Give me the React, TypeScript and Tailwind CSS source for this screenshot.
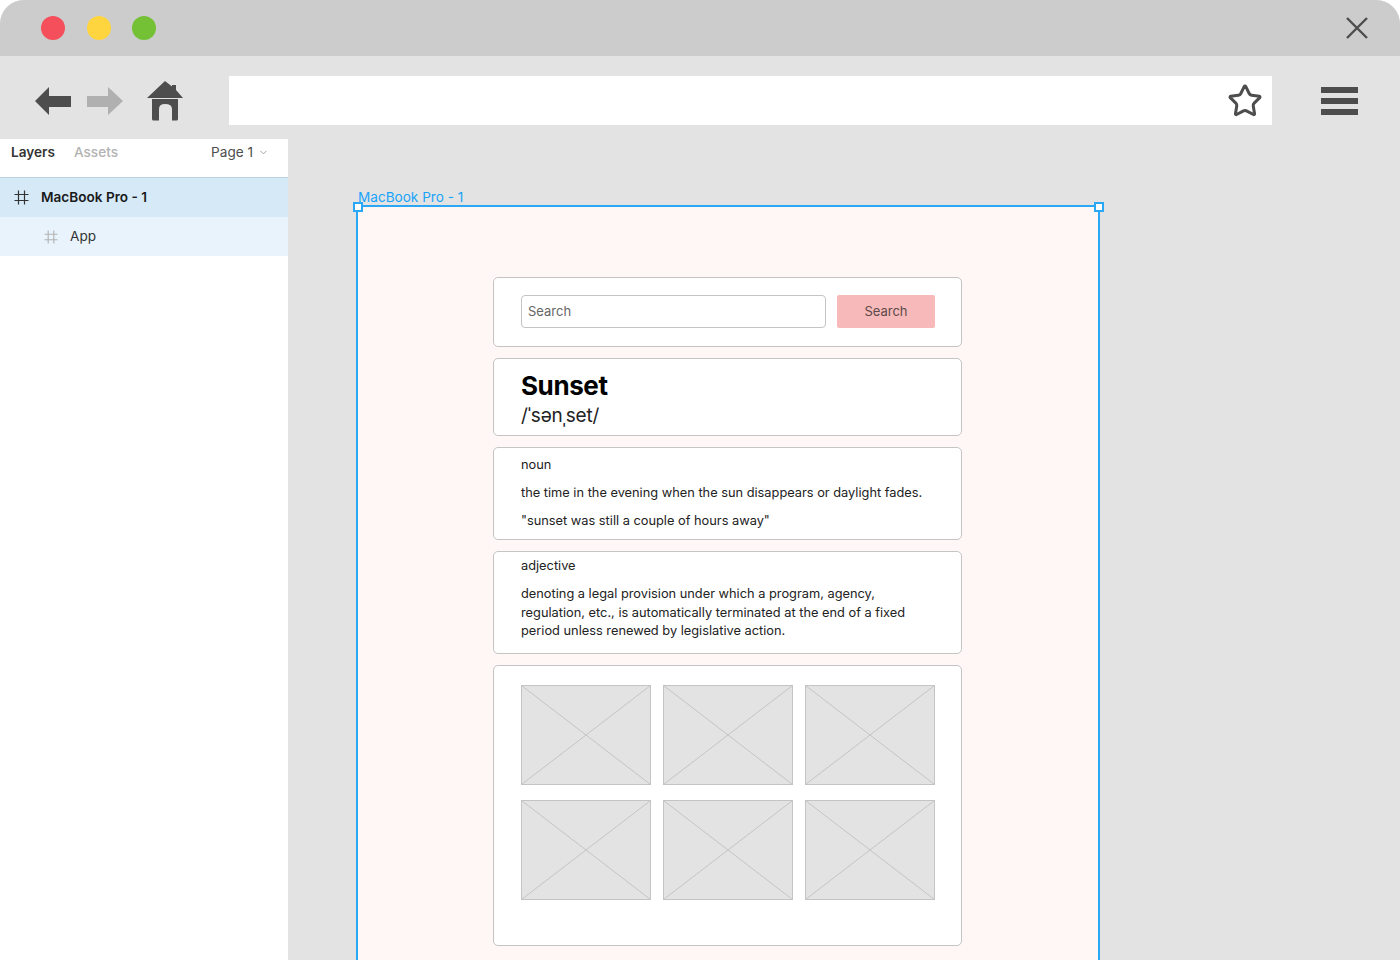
import React from "react";
import { ChevronDown, Star } from "lucide-react";

const HashIcon = ({ className }: { className: string }) => (
  <svg viewBox="0 0 15 15" className={className} fill="none" stroke="currentColor" strokeWidth="1.2">
    <path d="M4.5 0.5V14.5M10.5 0.5V14.5M0.5 4.5H14.5M0.5 10.5H14.5" />
  </svg>
);

const ImagePlaceholder = () => (
  <svg viewBox="0 0 130 100" className="block w-[130px] h-[100px] bg-[#e3e3e3]" fill="none" stroke="#c4c4c4" strokeWidth="1">
    <rect x="0.5" y="0.5" width="129" height="99" />
    <path d="M0.5 0.5L129.5 99.5M129.5 0.5L0.5 99.5" />
  </svg>
);

const card = "w-[469px] bg-white border border-[#c4c4c4] rounded-[5px]";

const App = () => {
  return (
    <div className="w-[1400px] h-[960px] overflow-hidden bg-white font-['Inter',sans-serif]">
      <div className="h-full flex flex-col overflow-hidden bg-[#e3e3e3] rounded-t-[24px]">
        {/* Title bar */}
        <div className="h-14 shrink-0 bg-[#cccccc] flex items-center pl-[41px] pr-[31px]">
          <div className="flex gap-[21.5px]">
            <div className="w-6 h-6 rounded-full bg-[#f44f5a]" />
            <div className="w-6 h-6 rounded-full bg-[#ffd53f]" />
            <div className="w-6 h-6 rounded-full bg-[#74c135]" />
          </div>
          <svg viewBox="0 0 24 24" className="ml-auto w-6 h-6" fill="none" stroke="#4d4d4d" strokeWidth="2.4">
            <path d="M2 2L22 22M22 2L2 22" />
          </svg>
        </div>

        {/* Toolbar */}
        <div className="h-[83px] shrink-0 flex items-center pl-[35px] pt-[6px]">
          <svg viewBox="0 0 36 30" className="w-9 h-[30px]" fill="#4d4d4d">
            <path d="M0 15L14 1V10H36V21H14V29Z" />
          </svg>
          <svg viewBox="0 0 36 30" className="ml-4 w-9 h-[30px]" fill="#b0b0b0">
            <path d="M36 15L21 1V10H0V21H21V29Z" />
          </svg>
          <svg viewBox="0 0 36 40" className="ml-6 w-9 h-10" fill="#4d4d4d">
            <path d="M18 0L25 5.5V4H29V9L36 17H0Z" />
            <path fillRule="evenodd" d="M5 18H31V38Q31 39.5 29.5 39.5H25V28Q25 23 18 23Q12 23 12 28V39.5H6.5Q5 39.5 5 38Z" />
          </svg>
          <div className="ml-[46px] w-[1043px] h-[49px] bg-white flex items-center justify-end pr-[9px]">
            <Star size={36} strokeWidth={2} color="#4d4d4d" />
          </div>
          <div className="ml-[49px] w-[37px] flex flex-col gap-[5px]">
            <div className="h-1.5 bg-[#4d4d4d]" />
            <div className="h-1.5 bg-[#4d4d4d]" />
            <div className="h-1.5 bg-[#4d4d4d]" />
          </div>
        </div>

        <div className="flex-1 flex min-h-0">
          {/* Layers panel */}
          <div className="w-[288px] shrink-0 bg-white text-[13.6px] text-[#333333]">
            <div className="h-[39px] flex items-center pl-[11px] pr-[19px] pb-[11px] border-b border-[#b9d3e6]">
              <span className="font-semibold">Layers</span>
              <span className="ml-[19px] font-medium text-[#b3b3b3]">Assets</span>
              <span className="ml-auto text-[#4d4d4d]">Page 1</span>
              <ChevronDown size={11} className="ml-[5px] text-[#999999]" />
            </div>
            <div className="h-[39px] flex items-center pl-[14px] pb-px bg-[#d5e9f7]">
              <HashIcon className="w-[15px] h-[15px] text-[#333333]" />
              <span className="ml-3 font-semibold text-[#1a1a1a]">MacBook Pro - 1</span>
            </div>
            <div className="h-[39px] flex items-center pl-[44px] bg-[#e8f3fb]">
              <HashIcon className="w-[14px] h-[14px] text-[#b3b3b3]" />
              <span className="ml-3">App</span>
            </div>
          </div>

          {/* Canvas */}
          <div className="flex-1 pl-[68px] pt-[48px]">
            <div className="h-[18px] text-[13.6px] leading-[21px] text-[#18a4fb] pl-[2px]">MacBook Pro - 1</div>
            <div className="relative w-[744px] h-[800px] bg-[#fff6f6] border-2 border-b-0 border-[#2aa8f5] pt-[70px] pl-[135px]">
              <div className="absolute -left-[5px] -top-[5px] w-[10px] h-[10px] bg-white border-2 border-[#2aa8f5]" />
              <div className="absolute -right-[6px] -top-[5px] w-[10px] h-[10px] bg-white border-2 border-[#2aa8f5]" />

              <div className="flex flex-col gap-[11px] text-[#222222] text-[12.8px]">
                <div className={`${card} h-[70px] flex items-center gap-[11px] pl-[27px] pb-[2px]`}>
                  <div className="w-[305px] h-[33px] flex items-center pl-[6px] pt-px border border-[#c4c4c4] rounded-[4px] text-[#666666] text-[13px]">
                    Search
                  </div>
                  <div className="w-[98px] h-[33px] flex items-center justify-center pt-px bg-[#f7b9b9] rounded-[2px] text-[#5e4a4a] text-[13px]">
                    Search
                  </div>
                </div>

                <div className={`${card} h-[78px] pl-[27px] pt-[10px]`}>
                  <div className="text-[26px] leading-[34px] font-bold text-black tracking-[-0.4px]">Sunset</div>
                  <div className="text-[19px] leading-[26px] tracking-[-0.2px] text-[#222222]">/ˈsənˌset/</div>
                </div>

                <div className={`${card} h-[93px] pl-[27px] pt-[8px]`}>
                  <p className="leading-[18px]">noun</p>
                  <p className="mt-[10px] leading-[18px]">the time in the evening when the sun disappears or daylight fades.</p>
                  <p className="mt-[10px] leading-[18px]">"sunset was still a couple of hours away"</p>
                </div>

                <div className={`${card} h-[103px] pl-[27px] pt-[5px]`}>
                  <p className="leading-[18px]">adjective</p>
                  <p className="mt-[10px] w-[400px] leading-[18.5px]">
                    denoting a legal provision under which a program, agency, regulation, etc., is automatically terminated at the end of a fixed period unless renewed by legislative action.
                  </p>
                </div>

                <div className={`${card} h-[281px] pl-[27px] pt-[19px]`}>
                  <div className="grid grid-cols-[130px_130px_130px] gap-x-3 gap-y-[15px]">
                    <ImagePlaceholder />
                    <ImagePlaceholder />
                    <ImagePlaceholder />
                    <ImagePlaceholder />
                    <ImagePlaceholder />
                    <ImagePlaceholder />
                  </div>
                </div>
              </div>
            </div>
          </div>
        </div>
      </div>
    </div>
  );
};

export default App;
